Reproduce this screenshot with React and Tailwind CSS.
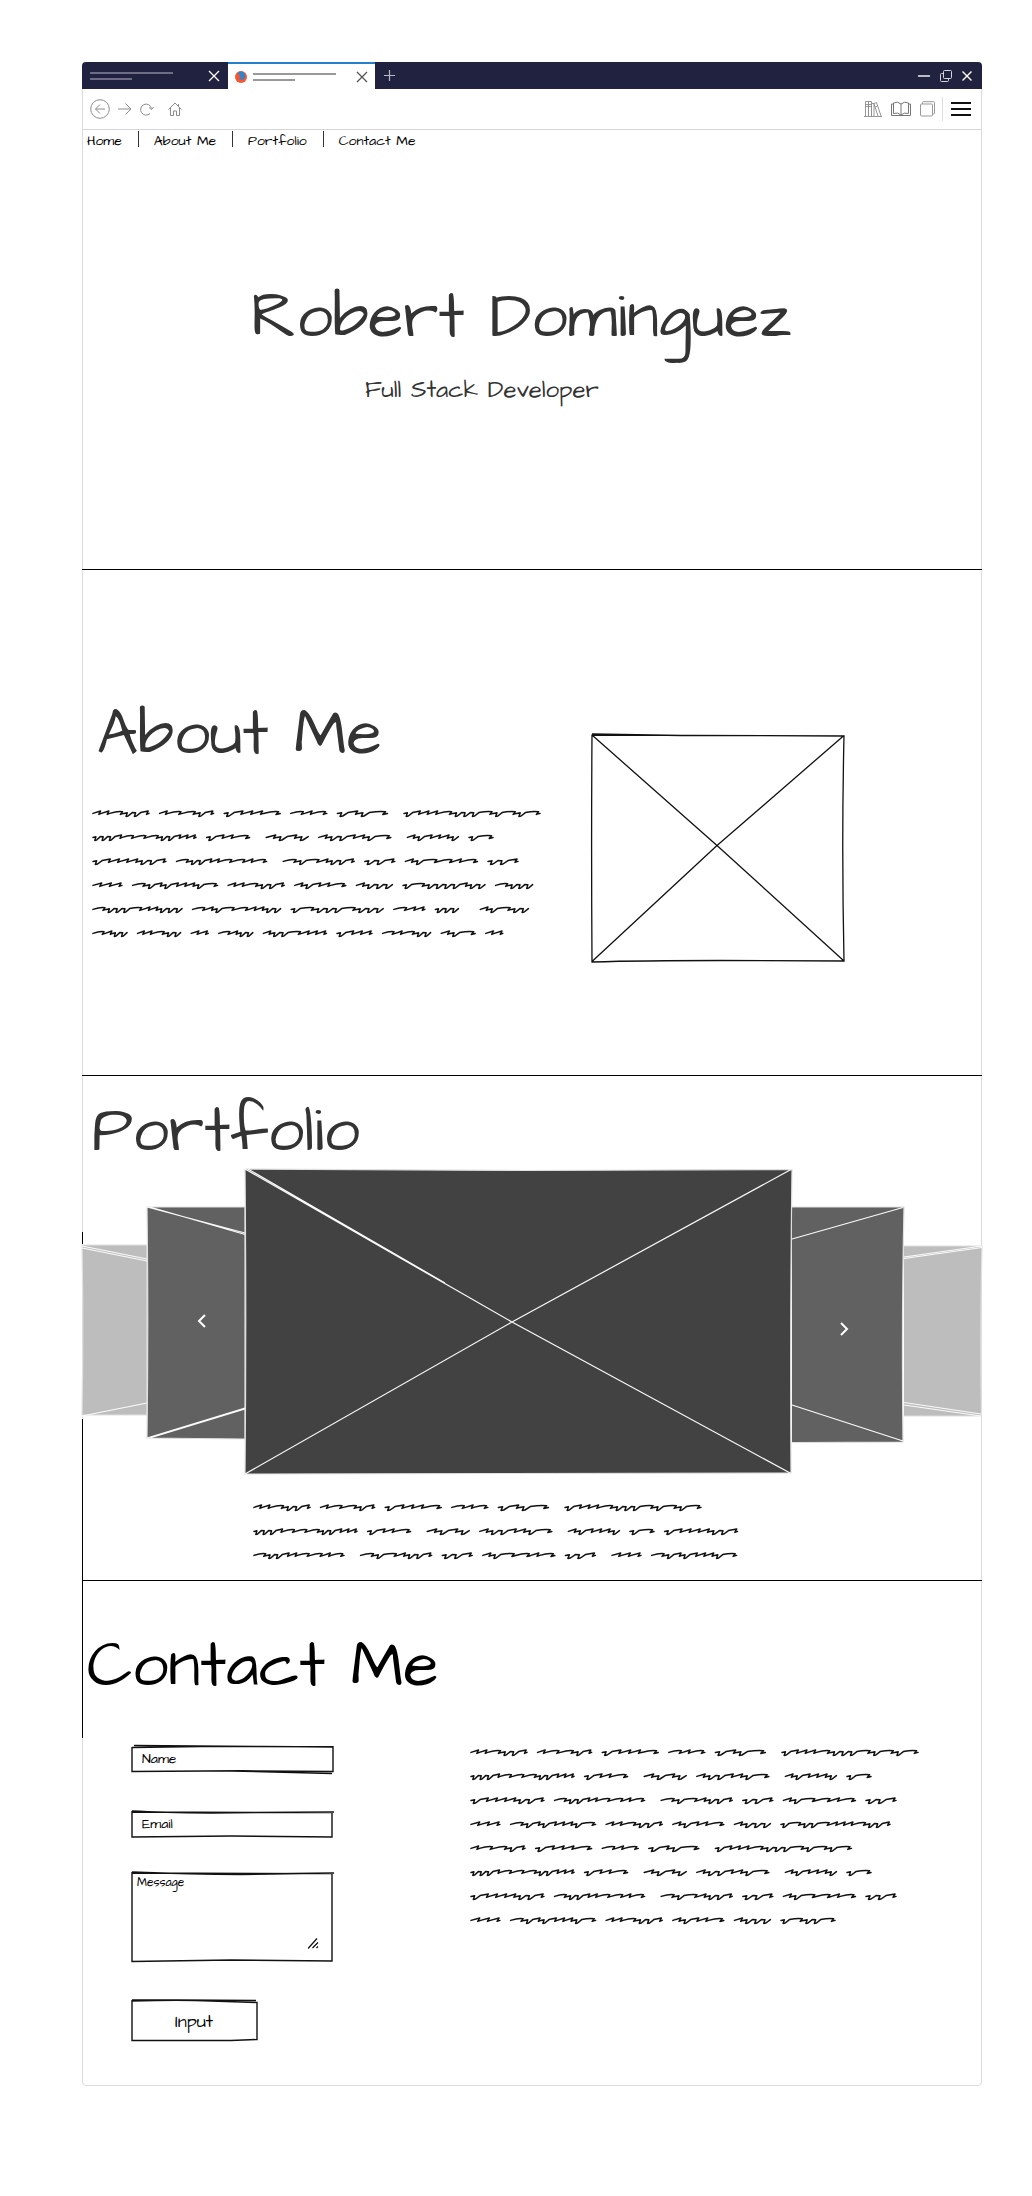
import React from "react";

/* ---------- scribbled placeholder copy ---------- */

// n = short hump, u = dipping hook, w = long wave; the number is the word's width.
const A = ["nnwuun", 56], B = ["nwwun", 54], C = ["unnnw", 56], D = ["wnw", 36], E = ["unuw", 50];
const F = ["unnnwuuuwuwuw", 136], G = ["uuunwwwuunnn", 103], H = ["unnw", 43], I = ["nunu", 42];
const J = ["nuunnuw", 72], K = ["nunnnu", 51], L = ["uw", 24], M = ["unnnnuun", 73];
const N = ["wuunnwwnw", 90], O = ["wuwnuun", 71], P = ["uun", 30], Q = ["nuwwnw", 72];
const S = ["nnn", 29], T = ["wununnnuw", 85], U = ["nnwuun", 56], V = ["nunnw", 51], W = ["nuuu", 36];
const GAP = 10.6;
const WIDE = 16.6;

const row1 = [A, GAP, B, GAP, C, GAP, D, GAP, E, WIDE, F];
const row2 = [G, GAP, H, WIDE, I, GAP, J, WIDE, K, GAP, L];
const row3 = [M, GAP, N, WIDE, O, GAP, P, GAP, Q, GAP, P];
const row4 = [S, GAP, T, GAP, U, GAP, V, GAP, W, GAP];

const ABOUT = [
  row1,
  row2,
  row3,
  [...row4, ["uwuuuunuu", 82], GAP, ["wuuu", 37]],
  [["wuuuwnnuuu", 89], GAP, ["wnuwwnnuu", 88], GAP, ["uwuuuwuuu", 92], GAP, ["wnn", 31], GAP, ["uuu", 23], 22, ["nuwuu", 48]],
  [["wnuu", 34], GAP, ["nnwuu", 43], GAP, ["nn", 17], GAP, ["wnuu", 34], GAP, ["nuuwnnn", 63], GAP, ["unnn", 35], GAP, ["wnwuu", 48], GAP, ["nuw", 34], GAP, ["nn", 17]],
];
const PORTFOLIO = [
  row1,
  [...row2, GAP, M],
  [N, WIDE, O, GAP, P, GAP, Q, GAP, P, WIDE, S, GAP, T],
];
const CONTACT = [
  row1,
  row2,
  row3,
  [...row4, ["uwuuwnnnwuun", 109]],
  [B, GAP, C, GAP, D, GAP, E, WIDE, F],
  row2,
  row3,
  [...row4, ["uwuuw", 54]],
];

function wordPath(shape, x, width) {
  const unit = width / [...shape].reduce((t, c) => t + (c === "w" ? 1.7 : 1), 0);
  let d = `M${x} 13.4`;
  for (const c of shape) {
    const w = c === "w" ? unit * 1.7 : unit;
    if (c === "n") {
      d += `L${x + w * 0.9} 11 L${x + w * 0.7} 14.4 L${x + w} 13.4`;
    } else if (c === "u") {
      d += `L${x + w * 0.4} 12.8 L${x + w * 0.25} 16.4 L${x + w * 0.5} 16 L${x + w} 12.6`;
    } else {
      d += `Q${x + w * 0.6} 10.8 ${x + w * 0.9} 11.8 L${x + w * 0.75} 14.4 L${x + w} 13.4`;
    }
    x += w;
  }
  return d;
}

function Scribble({ lines, label }) {
  return (
    <div role="img" aria-label={label}>
      {lines.map((line, i) => {
        let x = 3;
        const d = line
          .map((part) => {
            if (typeof part === "number") {
              x += part;
              return "";
            }
            const path = wordPath(part[0], x, part[1]);
            x += part[1];
            return path;
          })
          .join("");
        return (
          <svg key={i} width="490" height="24" className="block max-w-none" fill="none" stroke="#111" strokeWidth="1.5" strokeLinejoin="round" strokeLinecap="round">
            <path d={d} />
          </svg>
        );
      })}
    </div>
  );
}

/* ---------- hand-drawn frame for the form controls ---------- */

function Sketched({ d, box, className, children }) {
  return (
    <div className={`relative ${className}`}>
      <svg viewBox={box} preserveAspectRatio="none" className="pointer-events-none absolute inset-0 size-full overflow-visible" fill="none" stroke="#111" strokeWidth="1.4" aria-hidden="true">
        <path d={d} />
      </svg>
      {children}
    </div>
  );
}

function Panel({ box, fill, edge, lines, as: Tag = "div", className, children, ...rest }) {
  return (
    <Tag className={`relative block ${className}`} {...rest}>
      <svg viewBox={box} preserveAspectRatio="none" className="block size-full overflow-visible" aria-hidden="true">
        <path d={edge} fill={fill} stroke="#e0e0e0" strokeWidth="1.2" />
        <path d={lines} fill="none" stroke="#fafafa" strokeWidth="1.2" />
      </svg>
      {children}
    </Tag>
  );
}

/* ---------- browser chrome ---------- */

const Cross = ({ className }) => (
  <svg width="12" height="12" viewBox="0 0 12 12" className={className} fill="none" stroke="currentColor" strokeWidth="1.3">
    <path d="M1 1l10 10M11 1L1 11" />
  </svg>
);

function TabBar() {
  return (
    <div className="-mx-px -mt-px flex h-[27px] rounded-t bg-[#20223f] text-white">
      <div className="flex w-[146px] items-center justify-between pr-2 pl-2">
        <div className="space-y-1">
          <div className="h-0.5 w-[83px] bg-[#6d6e85]" />
          <div className="h-0.5 w-[42px] bg-[#6d6e85]" />
        </div>
        <button aria-label="Close tab"><Cross className="block" /></button>
      </div>
      <div className="flex w-[147px] items-center border-t-2 border-[#2580cc] bg-white pr-[7px] pl-[7px] text-[#555]">
        <svg width="12" height="12" viewBox="0 0 12 12" aria-hidden="true">
          <circle cx="6" cy="6" r="6" fill="#f9562f" />
          <path d="M3.2 1.2C5 0 8.600 .4 9.800 3c.9 2 .3 4.500-1.600 5.400C6.500 9.300 4.200 8.700 3.700 7c.8.400 1.800.2 2.300-.4C4.300 6.300 4.500 5 5.200 4.600 4 4.300 3 2.800 3.200 1.200z" fill="#2b86d0" />
        </svg>
        <div className="ml-1.5 flex-1 space-y-1">
          <div className="h-0.5 w-[83px] bg-[#999]" />
          <div className="h-0.5 w-[42px] bg-[#999]" />
        </div>
        <button aria-label="Close tab"><Cross className="block" /></button>
      </div>
      <button aria-label="New tab" className="ml-[7px] self-center p-0.5 text-[#b8b9c6]">
        <svg width="11" height="11" viewBox="0 0 11 11" className="block" stroke="currentColor" strokeWidth="1.2"><path d="M5.500 0v11M0 5.500h11" /></svg>
      </button>
      <div className="ml-auto flex items-center gap-2.5 pr-2.5">
        <button aria-label="Minimize"><svg width="12" height="12" viewBox="0 0 12 12" className="block" stroke="#fff" strokeWidth="1.4"><path d="M0 6h12" /></svg></button>
        <button aria-label="Restore">
          <svg width="12" height="12" viewBox="0 0 12 12" className="block" fill="none" stroke="#d5d5de">
            <rect x="3.500" y=".5" width="8" height="8" rx="1" />
            <path d="M3.500 3.500h-2q-1 0-1 1v6q0 1 1 1h6q1 0 1-1v-2" />
          </svg>
        </button>
        <button aria-label="Close window">
          <svg width="10" height="10" viewBox="0 0 10 10" className="block" stroke="#fff" strokeWidth="1.4"><path d="M.5.5l9 9M9.500.5l-9 9" /></svg>
        </button>
      </div>
    </div>
  );
}

function ToolBar() {
  return (
    <div className="flex h-[41px] items-center border-b border-[#d6d6d6] pr-1.5 pl-[7px] text-[#8c8c8c]">
      <button aria-label="Back">
        <svg width="20" height="20" viewBox="0 0 20 20" className="block" fill="none" stroke="currentColor">
          <circle cx="10" cy="10" r="9.300" />
          <path d="M15 10H5.500M10 5.500L5.500 10l4.500 4.500" />
        </svg>
      </button>
      <button aria-label="Forward" className="ml-2">
        <svg width="14" height="14" viewBox="0 0 14 14" className="block" fill="none" stroke="currentColor"><path d="M0 7h13M7.500 1.500L13 7l-5.500 5.500" /></svg>
      </button>
      <button aria-label="Reload" className="ml-2">
        <svg width="14" height="14" viewBox="0 0 14 14" className="block" fill="none" stroke="currentColor"><path d="M10 11.500A5.500 5.500 0 1 1 11.500 6.500M9 5.500l2.500 2L13.500 5" /></svg>
      </button>
      <button aria-label="Home page" className="ml-3.5">
        <svg width="14" height="14" viewBox="0 0 14 14" className="block" fill="none" stroke="currentColor"><path d="M.5 7.500L7 1l6.500 6.500M2.500 6v7.500h3V9h3v4.500h3V6M10.500 4V2" /></svg>
      </button>
      <div className="ml-auto flex items-center">
        <button aria-label="Library">
          <svg width="18" height="16" viewBox="0 0 18 16" className="block" fill="none" stroke="#8c8c8c" strokeWidth=".9">
            <path d="M0 15.500h18M1.500 15V.5h3V15M4.500 15V.5h3V15M7.500 15V2.500h2.500V15M1.500 3.500h6M1.500 5.500h6M10 2.500l2.500-1 4.500 13.500M10 3l4 12M11 6l2.500-1" />
          </svg>
        </button>
        <button aria-label="Reader" className="ml-[9px]">
          <svg width="20" height="16" viewBox="0 0 20 16" className="block" fill="none" stroke="#777">
            <path d="M10 3v11M10 3Q6.500-.2 2.500 2v10.500Q7 11 10 14M10 3q3.500-3.200 7.500-1v10.500Q13 11 10 14M2.500 3h-2v11.500H19.500V3h-2" />
          </svg>
        </button>
        <button aria-label="Sidebar" className="ml-[9px]">
          <svg width="15" height="16" viewBox="0 0 15 16" className="block" fill="none" stroke="#999">
            <rect x=".5" y="3" width="12" height="12" rx="1" />
            <path d="M2.500 3V1.500q0-.8.8-.8H13.700q.8 0 .8.8v10.700q0 .8-.8.8h-1.200" />
          </svg>
        </button>
        <div className="ml-[7px] h-6 w-px bg-[#ddd]" />
        <button aria-label="Menu" className="ml-2 pr-1">
          <svg width="20" height="14" viewBox="0 0 20 14" className="block" stroke="#111" strokeWidth="1.8"><path d="M0 1h20M0 7h20M0 13h20" /></svg>
        </button>
      </div>
    </div>
  );
}

function SiteNav() {
  const items = [["Home", "#home"], ["About Me", "#about"], ["Portfolio", "#portfolio"], ["Contact Me", "#contact"]];
  return (
    <nav className="flex h-5 items-start pt-px pl-[5px] text-sm/5 text-black">
      {items.map(([text, href], i) => (
        <React.Fragment key={href}>
          {i > 0 && <span className="mr-[15px] ml-4 h-4 w-px bg-[#333]" />}
          <a href={href}>{text}</a>
        </React.Fragment>
      ))}
    </nav>
  );
}

/* ---------- page ---------- */

export default function App() {
  return (
    <div className="bg-white pt-[62px] pr-[50px] pb-[110px] pl-[82px] font-['Architects_Daughter','Lato',sans-serif] text-[#333]">
      <div className="rounded border border-[#dcdcdc]">
        <TabBar />
        <ToolBar />

        <header id="home" className="-mx-px h-[440px] border-b border-black">
          <SiteNav />
          <h1 className="mt-32 pl-[169px] text-[64px]/[80px]">Robert Dominguez</h1>
          <p className="mt-4 pl-[283px] text-2xl/8">Full Stack Developer</p>
        </header>

        <section id="about" className="-mx-px flex h-[506px] border-b border-black">
          <div className="w-[509px] shrink-0 pt-[125px] pl-2">
            <h2 className="pl-[7px] text-[64px]/[80px]">About Me</h2>
            <div className="mt-[25px]"><Scribble lines={ABOUT} label="About me text" /></div>
          </div>
          <svg role="img" aria-label="Profile picture" viewBox="0 0 254 228" className="mt-[164px] h-[228px] w-[254px] shrink-0 overflow-visible" fill="none" stroke="#111" strokeWidth="1.3">
            <path d="M1 1.200L100 1.300 253 2Q250.500 110 253 227L130 226.500Q50 226.500 1 228Q.2 110 1 .5M1 0L90 1.500 253 1.800M1 1l125 110.500L253 227M253 1.500L126 111.500 1 227.500" />
          </svg>
        </section>

        <section id="portfolio" className="relative -mx-px h-[505px] border-b border-black">
          <span className="absolute top-[156px] left-0 h-3 w-px bg-black" />
          <span className="absolute top-[343px] bottom-0 left-0 w-px bg-black" />
          <h2 className="pt-4 pl-2.5 text-[64px]/[80px]">Portfolio</h2>
          <div className="-mt-[3px] grid grid-cols-[65fr_98fr_547fr_112fr_78fr] items-start">
            <Panel className="mt-[76px] h-[170px]" box="0 0 65 170" fill="#bdbdbd" edge="M0 0H65V170H0Q1.500 85 0 0" lines="M0 1L65 14M0 3L65 16M0 171L65 158" />
            <Panel as="button" aria-label="Previous project" className="mt-[38px] h-[232px] w-full" box="0 0 98 232" fill="#616161" edge="M0 0H98V232L0 231Q1.500 116 0 0" lines="M0 0L98 26M3 0L98 27.500M0 231L98 201M3 231L98 202">
              <svg width="10" height="14" viewBox="0 0 10 14" className="absolute top-[107px] left-1/2" fill="none" stroke="#fff" strokeWidth="2"><path d="M9 1L3 7l6 6" /></svg>
            </Panel>
            <Panel className="z-10 h-[305px]" box="0 0 547 305" fill="#424242" edge="M0 0L280 1.500 547 .5Q545 150 546 304L0 305Q1.500 150 0 0" lines="M0 0L267 153 546 304.500M3 0L200 114M0 305L267 153 546 .5" />
            <Panel as="button" aria-label="Next project" className="mt-[38px] h-[235px] w-full" box="0 0 112 235" fill="#616161" edge="M0 0H112Q109.500 117 111 235L0 235.500" lines="M0 32L111 .5M0 198L111 234">
              <svg width="10" height="14" viewBox="0 0 10 14" className="absolute top-[115px] left-[47px]" fill="none" stroke="#fff" strokeWidth="2"><path d="M2 1l6 6-6 6" /></svg>
            </Panel>
            <Panel className="mt-[77px] h-[170px]" box="0 0 78 170" fill="#bdbdbd" edge="M0 0H78Q76 85 77.500 170H0" lines="M0 11L78 0M0 12.500L78 1.500M0 156.500L77 168M0 159L77 170" />
          </div>
          <div className="mt-5 pl-[169px]"><Scribble lines={PORTFOLIO} label="Project description" /></div>
        </section>

        <section id="contact" className="relative -mx-px h-[504px] text-black">
          <span className="absolute top-0 left-0 h-[157px] w-px bg-black" />
          <h2 className="pt-[46px] pl-[5px] text-[64px]/[80px]">Contact Me</h2>
          <div className="flex">
            <form className="mt-[39px] ml-[49px] w-[202px] shrink-0" onSubmit={(e) => e.preventDefault()}>
              <Sketched className="h-[26px]" box="0 0 201 26" d="M1 1.500L70 .5 201 .8V25.500L110 24.800 1 25.500V1M3-.5L130 .5 201 1M100 25L200 27.500">
                <input aria-label="Name" placeholder="Name" className="relative block h-[26px] w-full bg-transparent px-[11px] text-sm text-black outline-none placeholder:text-black" />
              </Sketched>
              <Sketched className="mt-[39px] h-[26px]" box="0 0 201 26" d="M1 0Q30 1.500 80 2L202 1M1 1L200 1.600V26L100 25 1 26V0">
                <input aria-label="Email" type="email" placeholder="Email" className="relative block h-[26px] w-full bg-transparent px-[11px] text-sm text-black outline-none placeholder:text-black" />
              </Sketched>
              <Sketched className="mt-[35px] h-[89px]" box="0 0 201 89" d="M1 0Q60 2 110 2.500L202 1M1 1L200 1.600V89L100 88 1 89.500V0">
                <textarea aria-label="Message" placeholder="Message" className="relative block h-[89px] w-full resize-none bg-transparent px-1.5 pt-[3px] text-xs/4 text-black outline-none placeholder:text-black" />
                <svg width="11" height="11" viewBox="0 0 11 11" className="absolute right-3.5 bottom-3" stroke="#111" strokeWidth="1.3" aria-hidden="true"><path d="M0 10.500L9 .5M4.500 10L10 4.500M8.500 10l1.500-1.500" /></svg>
              </Sketched>
              <Sketched className="mt-[39px] h-10 w-[126px]" box="0 0 126 40" d="M1 0Q70-.5 125 .5M1 1Q50-.5 80 1L126 2.500V39.500L100 40.500H1V0">
                <button type="submit" className="relative block h-10 w-full pt-1 text-lg text-black">Input</button>
              </Sketched>
            </form>
            <div className="mt-8 ml-[135px]"><Scribble lines={CONTACT} label="Contact text" /></div>
          </div>
        </section>
      </div>
    </div>
  );
}
